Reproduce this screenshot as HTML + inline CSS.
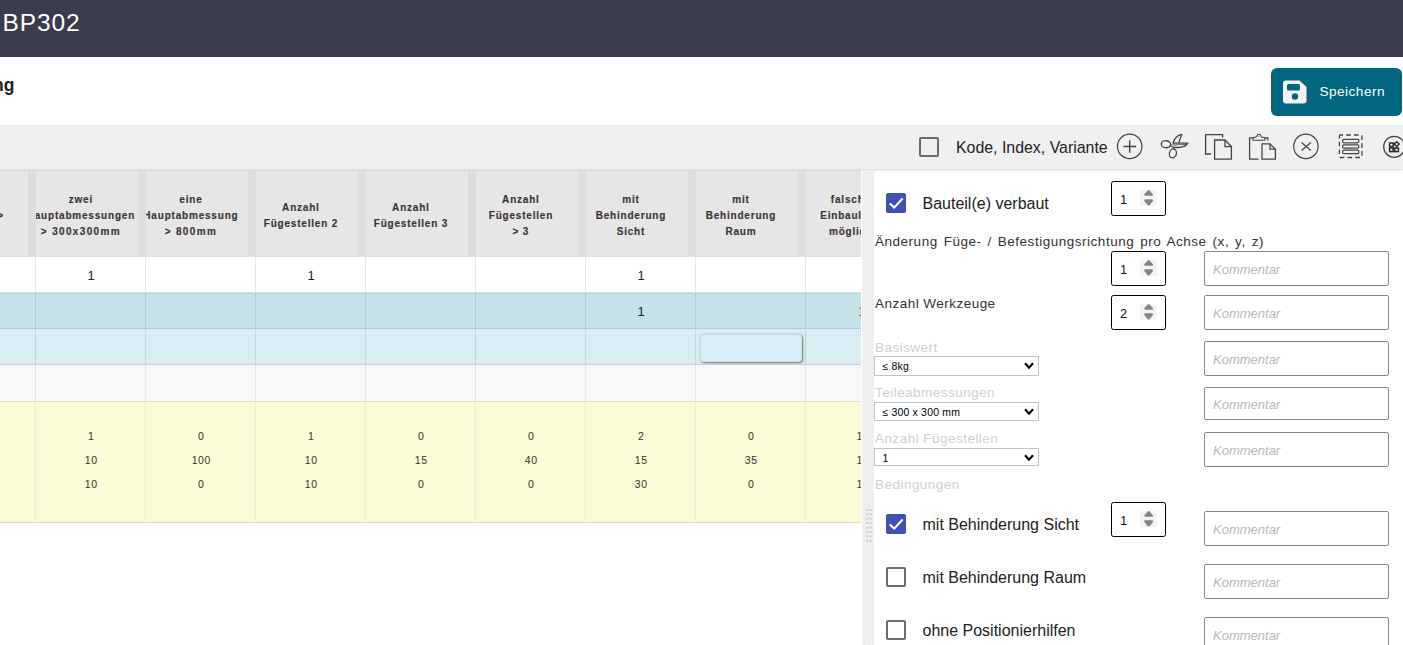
<!DOCTYPE html>
<html>
<head>
<meta charset="utf-8">
<title>BP302</title>
<style>
*{box-sizing:border-box;margin:0;padding:0}
html,body{width:1403px;height:645px;overflow:hidden;background:#fff;font-family:"Liberation Sans",sans-serif;color:#333}
.abs{position:absolute}
#topbar{left:0;top:0;width:1403px;height:57px;background:#3a3b4b}
#title{left:2.5px;top:9px;font-size:24.5px;line-height:28px;color:#fff;letter-spacing:.9px;white-space:nowrap}
#sub{left:-60px;width:74.5px;text-align:right;top:75px;font-size:17.5px;line-height:20px;font-weight:bold;color:#222;white-space:nowrap}
#save{left:1271px;top:68px;width:131px;height:48px;border-radius:6px;background:#00677f}
#save span{position:absolute;left:48.5px;top:14.6px;font-size:13.6px;letter-spacing:.47px;line-height:18px;color:#fff;white-space:nowrap}
#toolbar{left:0;top:125px;width:1403px;height:44px;background:#f0f0f0;box-shadow:0 1px 2px rgba(0,0,0,.18)}
.cb{width:20px;height:20px;border:2px solid #6b6b6b;border-radius:2px;background:transparent}
.cb.on{background:#3f51b5;border-color:#3f51b5}
.lbl16{font-size:16px;line-height:20px;color:#222;white-space:nowrap}
/* table */
#tbl{left:0;top:170px;width:861px;height:360px;overflow:hidden}
#thead{left:0;top:0;width:861px;height:87px;background:#e6e6e6;border-top:1px dotted #cfcfcf;border-bottom:1px solid #dddddd}
.grip{top:1px;width:7.6px;height:85px;background:#dedddc}
.th{top:0;height:87px;width:102px;overflow:hidden}
.th div{-webkit-text-stroke:.15px #3b3433;position:absolute;left:-55.1px;width:200px;text-align:center;font-weight:bold;font-size:10px;letter-spacing:.8px;line-height:16px;color:#3b3433;white-space:nowrap}
.row{left:0;width:861px;height:36px}
.vl{top:0;width:1px}
.c13{font-size:13px;line-height:16px;color:#222;text-align:center;width:110px}
.c10{font-size:10.5px;letter-spacing:.6px;padding-left:.6px;line-height:12px;color:#333;text-align:center;width:110px}
/* right panel */
#split{left:862px;top:170px;width:12px;height:475px;background:#f1f1f1;background-image:radial-gradient(circle at .5px .5px,#e4e4e4 .5px,transparent .6px),radial-gradient(circle at 2.5px 2.5px,#e4e4e4 .5px,transparent .6px);background-size:4px 4px}
.num{left:1111px;width:55px;height:35px;border:1px solid #000;border-radius:2.5px;background:#fff}
.num span{position:absolute;left:8px;top:9.5px;font-size:12.8px;line-height:16px;color:#111}
.num svg{position:absolute;left:28px;top:8px}
.kom{left:1204px;width:185px;height:35px;border:1px solid #8a8a8a;border-radius:2px;background:#fff}
.kom span{position:absolute;left:8px;top:9px;font-size:13px;line-height:17px;font-style:italic;color:#b8b8b6}
.l13{left:875px;font-size:13.5px;letter-spacing:.47px;line-height:16px;color:#333;white-space:nowrap}
.l13.dis{color:#cfcfcf}
.sel{left:874px;width:165px;height:20px;border:1px solid #bfc6c7;background:#fff}
.sel span{position:absolute;left:7.4px;top:3px;font-size:10.5px;letter-spacing:.18px;line-height:12px;color:#000;white-space:nowrap}
.sel svg{position:absolute;left:149px;top:5px}
</style>
</head>
<body>
<div id="topbar" class="abs"></div>
<div id="title" class="abs">BP302</div>
<div id="sub" class="abs">ng</div>

<div id="save" class="abs">
<svg class="abs" style="left:12px;top:12px" width="24" height="24" viewBox="0 0 24 24"><path d="M3 .5H16.5L23.5 7V20.5a3 3 0 0 1-3 3H3a3 3 0 0 1-3-3V3.5a3 3 0 0 1 3-3Z" fill="#f2f2f2"/><rect x="4" y="4" width="13" height="6.5" rx="1.5" fill="#00677f"/><circle cx="12" cy="16.5" r="3.2" fill="#00677f"/></svg>
<span>Speichern</span></div>

<div id="toolbar" class="abs"></div>
<div class="abs cb" style="left:919px;top:137px"></div>
<div class="abs lbl16" style="left:956px;top:138px;font-size:15.9px">Kode, Index, Variante</div>
<svg class="abs" style="left:1110px;top:127px" width="293" height="40" viewBox="1110 127 293 40" fill="none" stroke="#444" stroke-width="1.3">
<!-- plus -->
<circle cx="1129.7" cy="146.4" r="12.2" stroke-width="1.2"/>
<path d="M1123.5 146.5H1136M1129.7 140.2V152.8" stroke-width="1.4"/>
<!-- scissors -->
<ellipse cx="1165.9" cy="144.2" rx="4.7" ry="3.5" transform="rotate(8 1165.9 144.2)"/>
<ellipse cx="1172.9" cy="153.4" rx="3.5" ry="4.5" transform="rotate(14 1172.9 153.4)"/>
<path d="M1173 143.5C1174 139.2 1177 135 1181.9 134.3L1178.6 143.1" stroke-linejoin="round"/>
<path d="M1172.6 143.2H1187.8C1186 146.2 1182 147.5 1178 147.5H1173.6" stroke-linejoin="round"/>
<path d="M1170.4 145.1L1174 144.9L1186 144.4" stroke-width=".8"/>
<path d="M1170.3 146L1173.8 147.5L1172.9 149.2" stroke-width="1.1"/>
<circle cx="1174.9" cy="145.4" r=".5" fill="#444" stroke="none"/>
<!-- copy -->
<path d="M1211 154H1205.6V134.6H1222.6V137.4"/>
<path d="M1214.6 140H1225L1231.4 146.6V159.2H1214.6Z"/>
<path d="M1225 140V146.6H1231.4"/>
<!-- paste -->
<path d="M1258.5 159.2H1249.6V137.8H1253M1264.8 137.8H1267.8V140.6"/>
<path d="M1253 140.2V137.7C1255.4 137.7 1256.4 137.4 1256.8 136.2C1257.4 133.6 1260.4 133.6 1261 136.2C1261.4 137.4 1262.4 137.7 1264.8 137.7V140.2Z" stroke-width="1.1"/><circle cx="1258.9" cy="136.6" r=".5" fill="#444" stroke="none"/>
<path d="M1262 143.8H1270L1275.4 149.2V159.2H1262Z"/>
<path d="M1270 143.8V149.2H1275.4"/>
<!-- x -->
<circle cx="1305.9" cy="146.4" r="12.2" stroke-width="1.2"/>
<path d="M1301.6 142.4L1310.8 150.6M1310.8 142.4L1301.6 150.6" stroke-width="1.3"/>
<!-- select all -->
<rect x="1339.4" y="135" width="22.5" height="22.5" rx="1" stroke-width="1.3" stroke-dasharray="4.6 3.2" stroke-dashoffset="2"/>
<rect x="1342.6" y="139.4" width="16.2" height="3.4" rx="1.2" stroke-width="1.2"/>
<rect x="1342.6" y="144.8" width="16.2" height="3.4" rx="1.2" stroke-width="1.2"/>
<rect x="1342.6" y="150.2" width="16.2" height="3.4" rx="1.2" stroke-width="1.2"/>
<!-- widgets -->
<circle cx="1394.2" cy="146.8" r="10.5" stroke-width="1.3"/>
<rect x="1389.6" y="143" width="3.6" height="3.6" stroke="#2a2a2a" stroke-width="1.5"/>
<rect x="1389.6" y="148" width="3.6" height="3.6" stroke="#2a2a2a" stroke-width="1.5"/>
<rect x="1394.8" y="148" width="3.6" height="3.6" stroke="#2a2a2a" stroke-width="1.5"/>
<rect x="1395" y="142.4" width="3.4" height="3.4" stroke="#2a2a2a" stroke-width="1.5" transform="rotate(45 1396.7 144.1)"/>
</svg>

<!-- TABLE -->
<div id="tbl" class="abs">
<div id="thead" class="abs"></div>
<!--HEAD-->
<div class="abs th" style="left:0;width:28px"><div style="left:auto;right:24px;width:auto;text-align:right;top:21.6px">&nbsp;<br>Einbaulage &gt;<br>&nbsp;</div></div>
<div class="abs grip" style="left:28px"></div>
<div class="abs th" style="left:36px"><div style="top:21.6px">zwei<br>Hauptabmessungen<br><span style="letter-spacing:1.35px">&gt; 300x300mm</span></div></div>
<div class="abs grip" style="left:138px"></div>
<div class="abs th" style="left:146px"><div style="top:21.6px">eine<br>Hauptabmessung<br><span style="letter-spacing:1.35px">&gt; 800mm</span></div></div>
<div class="abs grip" style="left:248px"></div>
<div class="abs th" style="left:256px"><div style="top:29.6px">Anzahl<br>Fügestellen 2</div></div>
<div class="abs grip" style="left:358px"></div>
<div class="abs th" style="left:366px"><div style="top:29.6px">Anzahl<br>Fügestellen 3</div></div>
<div class="abs grip" style="left:468px"></div>
<div class="abs th" style="left:476px"><div style="top:21.6px">Anzahl<br>Fügestellen<br>&gt; 3</div></div>
<div class="abs grip" style="left:578px"></div>
<div class="abs th" style="left:586px"><div style="top:21.6px">mit<br>Behinderung<br>Sicht</div></div>
<div class="abs grip" style="left:688px"></div>
<div class="abs th" style="left:696px"><div style="top:21.6px">mit<br>Behinderung<br>Raum</div></div>
<div class="abs grip" style="left:798px"></div>
<div class="abs th" style="left:806px"><div style="top:21.6px">falsche<br>Einbaulage<br>möglich</div></div>
<div class="abs grip" style="left:908px"></div>
<!--/HEAD-->
<!--ROWS-->
<div class="abs row" style="top:87px;height:36px;background:#fff;border-bottom:1px solid #dcdcdc;"><div class="abs vl" style="left:35px;height:36px;background:#e6e6e6"></div><div class="abs vl" style="left:145px;height:36px;background:#e6e6e6"></div><div class="abs vl" style="left:255px;height:36px;background:#e6e6e6"></div><div class="abs vl" style="left:365px;height:36px;background:#e6e6e6"></div><div class="abs vl" style="left:475px;height:36px;background:#e6e6e6"></div><div class="abs vl" style="left:585px;height:36px;background:#e6e6e6"></div><div class="abs vl" style="left:695px;height:36px;background:#e6e6e6"></div><div class="abs vl" style="left:805px;height:36px;background:#e6e6e6"></div><div class="abs c13" style="left:36px;top:10.5px">1</div><div class="abs c13" style="left:256px;top:10.5px">1</div><div class="abs c13" style="left:586px;top:10.5px">1</div></div>
<div class="abs row" style="top:123px;height:36px;background:#c6e2e9;border-top:1px solid #b5d6e2;border-bottom:1px solid #a6cfdf;"><div class="abs vl" style="left:35px;height:36px;background:#a6cfdf"></div><div class="abs vl" style="left:145px;height:36px;background:#a6cfdf"></div><div class="abs vl" style="left:255px;height:36px;background:#a6cfdf"></div><div class="abs vl" style="left:365px;height:36px;background:#a6cfdf"></div><div class="abs vl" style="left:475px;height:36px;background:#a6cfdf"></div><div class="abs vl" style="left:585px;height:36px;background:#a6cfdf"></div><div class="abs vl" style="left:695px;height:36px;background:#a6cfdf"></div><div class="abs vl" style="left:805px;height:36px;background:#a6cfdf"></div><div class="abs c13" style="left:586px;top:9.5px">1</div><div class="abs c13" style="left:858px;top:9.5px;width:auto;color:#c60">1</div></div>
<div class="abs row" style="top:159px;height:36px;background:#dcedf3;background-image:radial-gradient(circle at .5px .5px,#cbe0e8 .5px,transparent .6px),radial-gradient(circle at 2.5px 2.5px,#cbe0e8 .5px,transparent .6px);background-size:4px 4px;border-bottom:1px solid #b4d8e6;"><div class="abs vl" style="left:35px;height:36px;background:#b9dbe8"></div><div class="abs vl" style="left:145px;height:36px;background:#b9dbe8"></div><div class="abs vl" style="left:255px;height:36px;background:#b9dbe8"></div><div class="abs vl" style="left:365px;height:36px;background:#b9dbe8"></div><div class="abs vl" style="left:475px;height:36px;background:#b9dbe8"></div><div class="abs vl" style="left:585px;height:36px;background:#b9dbe8"></div><div class="abs vl" style="left:695px;height:36px;background:#b9dbe8"></div><div class="abs vl" style="left:805px;height:36px;background:#b9dbe8"></div><div class="abs" style="left:700px;top:5px;width:102px;height:28px;border-radius:4px;border:1px solid #d4dde0;box-shadow:1px 1px 2px rgba(90,90,90,.75),0 0 2px rgba(120,120,120,.4)"></div></div>
<div class="abs row" style="top:195px;height:37px;background:#fafafa;background-image:radial-gradient(circle at .5px .5px,#ebebeb .5px,transparent .6px),radial-gradient(circle at 2.5px 2.5px,#ebebeb .5px,transparent .6px);background-size:4px 4px;border-bottom:1px solid #dedede;"><div class="abs vl" style="left:35px;height:37px;background:#e6e6e6"></div><div class="abs vl" style="left:145px;height:37px;background:#e6e6e6"></div><div class="abs vl" style="left:255px;height:37px;background:#e6e6e6"></div><div class="abs vl" style="left:365px;height:37px;background:#e6e6e6"></div><div class="abs vl" style="left:475px;height:37px;background:#e6e6e6"></div><div class="abs vl" style="left:585px;height:37px;background:#e6e6e6"></div><div class="abs vl" style="left:695px;height:37px;background:#e6e6e6"></div><div class="abs vl" style="left:805px;height:37px;background:#e6e6e6"></div></div>
<div class="abs row" style="top:232px;height:121px;background:#fbfbd5;border-bottom:1px solid #d9d9d9;"><div class="abs vl" style="left:35px;height:121px;background:#ececd0"></div><div class="abs vl" style="left:145px;height:121px;background:#ececd0"></div><div class="abs vl" style="left:255px;height:121px;background:#ececd0"></div><div class="abs vl" style="left:365px;height:121px;background:#ececd0"></div><div class="abs vl" style="left:475px;height:121px;background:#ececd0"></div><div class="abs vl" style="left:585px;height:121px;background:#ececd0"></div><div class="abs vl" style="left:695px;height:121px;background:#ececd0"></div><div class="abs vl" style="left:805px;height:121px;background:#ececd0"></div><div class="abs c10" style="left:36px;top:28px">1</div><div class="abs c10" style="left:36px;top:52px">10</div><div class="abs c10" style="left:36px;top:76px">10</div><div class="abs c10" style="left:146px;top:28px">0</div><div class="abs c10" style="left:146px;top:52px">100</div><div class="abs c10" style="left:146px;top:76px">0</div><div class="abs c10" style="left:256px;top:28px">1</div><div class="abs c10" style="left:256px;top:52px">10</div><div class="abs c10" style="left:256px;top:76px">10</div><div class="abs c10" style="left:366px;top:28px">0</div><div class="abs c10" style="left:366px;top:52px">15</div><div class="abs c10" style="left:366px;top:76px">0</div><div class="abs c10" style="left:476px;top:28px">0</div><div class="abs c10" style="left:476px;top:52px">40</div><div class="abs c10" style="left:476px;top:76px">0</div><div class="abs c10" style="left:586px;top:28px">2</div><div class="abs c10" style="left:586px;top:52px">15</div><div class="abs c10" style="left:586px;top:76px">30</div><div class="abs c10" style="left:696px;top:28px">0</div><div class="abs c10" style="left:696px;top:52px">35</div><div class="abs c10" style="left:696px;top:76px">0</div><div class="abs c10" style="left:856px;width:auto;top:28px">1</div><div class="abs c10" style="left:856px;width:auto;top:52px">1</div><div class="abs c10" style="left:856px;width:auto;top:76px">1</div></div>
<!--/ROWS-->
</div>

<!-- SPLITTER -->
<div id="split" class="abs"></div>
<svg class="abs" style="left:865px;top:508px" width="8" height="34" viewBox="0 0 8 34"><rect x="1" y="1.0" width="2.4" height="1.8" fill="#cfcfcf"/><rect x="4.4" y="1.0" width="2.4" height="1.8" fill="#cfcfcf"/><rect x="1" y="5.4" width="2.4" height="1.8" fill="#cfcfcf"/><rect x="4.4" y="5.4" width="2.4" height="1.8" fill="#cfcfcf"/><rect x="1" y="9.8" width="2.4" height="1.8" fill="#cfcfcf"/><rect x="4.4" y="9.8" width="2.4" height="1.8" fill="#cfcfcf"/><rect x="1" y="14.2" width="2.4" height="1.8" fill="#cfcfcf"/><rect x="4.4" y="14.2" width="2.4" height="1.8" fill="#cfcfcf"/><rect x="1" y="18.6" width="2.4" height="1.8" fill="#cfcfcf"/><rect x="4.4" y="18.6" width="2.4" height="1.8" fill="#cfcfcf"/><rect x="1" y="23.0" width="2.4" height="1.8" fill="#cfcfcf"/><rect x="4.4" y="23.0" width="2.4" height="1.8" fill="#cfcfcf"/><rect x="1" y="27.4" width="2.4" height="1.8" fill="#cfcfcf"/><rect x="4.4" y="27.4" width="2.4" height="1.8" fill="#cfcfcf"/><rect x="1" y="31.8" width="2.4" height="1.8" fill="#cfcfcf"/><rect x="4.4" y="31.8" width="2.4" height="1.8" fill="#cfcfcf"/></svg>

<!-- RIGHT PANEL -->
<!--RIGHT-->
<div class="abs cb on" style="left:886px;top:193px"><svg width="20" height="20" viewBox="0 0 20 20" style="position:absolute;left:-2px;top:-2px"><path d="M3.8 10.5L8.2 14.6L16.6 5.5" fill="none" stroke="#fff" stroke-width="2"/></svg></div>
<div class="abs lbl16" style="left:922.5px;top:194px">Bauteil(e) verbaut</div>
<div class="abs num" style="top:181px"><span>1</span><svg width="17" height="16" viewBox="0 0 17 16"><rect width="17" height="16" fill="#f4f4f4"/><path d="M5.4 4.7L8.65 1.3L11.9 4.7Z M5.4 10.4L8.65 14.4L11.9 10.4Z" fill="#848484" stroke="#848484" stroke-width="2.3" stroke-linejoin="round"/></svg></div>
<div class="abs l13" style="top:234px"><span style="word-spacing:1.7px;letter-spacing:.52px">Änderung Füge- / Befestigungsrichtung pro Achse (x, y, z)</span></div>
<div class="abs num" style="top:251px"><span>1</span><svg width="17" height="16" viewBox="0 0 17 16"><rect width="17" height="16" fill="#f4f4f4"/><path d="M5.4 4.7L8.65 1.3L11.9 4.7Z M5.4 10.4L8.65 14.4L11.9 10.4Z" fill="#848484" stroke="#848484" stroke-width="2.3" stroke-linejoin="round"/></svg></div>
<div class="abs kom" style="top:251px;height:35px"><span style="top:9.0px">Kommentar</span></div>
<div class="abs l13" style="top:296px">Anzahl Werkzeuge</div>
<div class="abs num" style="top:295px"><span>2</span><svg width="17" height="16" viewBox="0 0 17 16"><rect width="17" height="16" fill="#f4f4f4"/><path d="M5.4 4.7L8.65 1.3L11.9 4.7Z M5.4 10.4L8.65 14.4L11.9 10.4Z" fill="#848484" stroke="#848484" stroke-width="2.3" stroke-linejoin="round"/></svg></div>
<div class="abs kom" style="top:295px;height:35px"><span style="top:9.0px">Kommentar</span></div>
<div class="abs l13 dis" style="top:340px">Basiswert</div>
<div class="abs sel" style="top:356px;height:20px"><span>≤ 8kg</span><svg width="10" height="8" viewBox="0 0 10 8"><path d="M1 1.3L5 5.7L9 1.3" fill="none" stroke="#000" stroke-width="2.1"/></svg></div>
<div class="abs kom" style="top:341px;height:35px"><span style="top:9.0px">Kommentar</span></div>
<div class="abs l13 dis" style="top:385px">Teileabmessungen</div>
<div class="abs sel" style="top:402.2px;height:18.4px"><span>≤ 300 x 300 mm</span><svg width="10" height="8" viewBox="0 0 10 8"><path d="M1 1.3L5 5.7L9 1.3" fill="none" stroke="#000" stroke-width="2.1"/></svg></div>
<div class="abs kom" style="top:387px;height:33.4px"><span style="top:8.2px">Kommentar</span></div>
<div class="abs l13 dis" style="top:431px">Anzahl Fügestellen</div>
<div class="abs sel" style="top:448px;height:18.4px"><span>1</span><svg width="10" height="8" viewBox="0 0 10 8"><path d="M1 1.3L5 5.7L9 1.3" fill="none" stroke="#000" stroke-width="2.1"/></svg></div>
<div class="abs kom" style="top:432px;height:35px"><span style="top:9.0px">Kommentar</span></div>
<div class="abs l13 dis" style="top:477px">Bedingungen</div>
<div class="abs cb on" style="left:886px;top:514px"><svg width="20" height="20" viewBox="0 0 20 20" style="position:absolute;left:-2px;top:-2px"><path d="M3.8 10.5L8.2 14.6L16.6 5.5" fill="none" stroke="#fff" stroke-width="2"/></svg></div>
<div class="abs lbl16" style="left:922.5px;top:515px">mit Behinderung Sicht</div>
<div class="abs num" style="top:502px"><span>1</span><svg width="17" height="16" viewBox="0 0 17 16"><rect width="17" height="16" fill="#f4f4f4"/><path d="M5.4 4.7L8.65 1.3L11.9 4.7Z M5.4 10.4L8.65 14.4L11.9 10.4Z" fill="#848484" stroke="#848484" stroke-width="2.3" stroke-linejoin="round"/></svg></div>
<div class="abs kom" style="top:511px;height:35px"><span style="top:9.0px">Kommentar</span></div>
<div class="abs cb" style="left:886px;top:567px"></div>
<div class="abs lbl16" style="left:922.5px;top:568px">mit Behinderung Raum</div>
<div class="abs kom" style="top:564px;height:35px"><span style="top:9.0px">Kommentar</span></div>
<div class="abs cb" style="left:886px;top:620px"></div>
<div class="abs lbl16" style="left:922.5px;top:621px">ohne Positionierhilfen</div>
<div class="abs kom" style="top:617px;height:35px"><span style="top:9.0px">Kommentar</span></div>
<!--/RIGHT-->
</body>
</html>
